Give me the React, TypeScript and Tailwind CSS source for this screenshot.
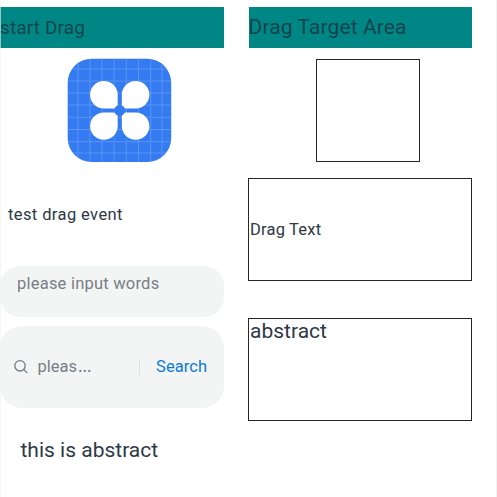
function AppIcon() {
  const lines = [11, 23, 35, 47, 59.3, 71.5, 83.7, 95];
  const petal = "M13.8 0A13.9 13.7 0 0 1 27.7 13.7V23.4a4 4 0 0 1-4 4H13.8a13.7 13.7 0 0 1 0-27.4Z";
  return (
    <svg className="mt-[10px] ml-[67px] block h-[104px] w-[105px]" viewBox="0 0 105 104">
      <defs>
        <clipPath id="tile">
          <rect x="0.7" y="0.7" width="103.5" height="103.3" rx="24" />
        </clipPath>
      </defs>
      <g clipPath="url(#tile)">
        <rect width="105" height="104" fill="#347af0" />
        {lines.map((n) => (
          <path key={n} d={`M${n} 0V104M0 ${n}H105`} stroke="#5b93f4" strokeWidth="1" />
        ))}
      </g>
      <g fill="#fff">
        <path d={petal} transform="translate(23 23)" />
        <path d={petal} transform="translate(82.5 23) scale(-1 1)" />
        <path d={petal} transform="translate(23 81.8) scale(1 -1)" />
        <path d={petal} transform="translate(82.5 81.8) scale(-1 -1)" />
      </g>
      <circle cx="52.7" cy="52.4" r="5.4" fill="#347af0" />
    </svg>
  );
}

export default function App() {
  return (
    <main className="relative flex h-[497px] w-[497px] overflow-hidden bg-white pt-[7px] font-['Roboto','Noto_Sans',sans-serif] whitespace-nowrap text-[#2e3846]">
      <section className="w-[248px] shrink-0">
        <h1 className="flex h-[41px] w-[223.6px] items-center bg-[#008785] pt-px text-[19px] tracking-[0.12px] text-[#14444d]">
          <span>start Drag</span>
        </h1>
        <AppIcon />
        <p className="mt-[40px] ml-[8px] h-6 pt-px text-[16.5px] leading-6 tracking-[0.4px]">
          <span>test drag event</span>
        </p>
        <div className="mt-[40px] h-[51px] w-[223.6px] rounded-[20px] bg-[#f3f5f5] pt-[6px] pl-[17px] text-[16.5px] leading-6 tracking-[0.22px] text-[#777e86]">
          <span>please input words</span>
        </div>
        <div className="mt-[8.6px] flex h-[82.4px] w-[223.6px] items-center rounded-[22px] bg-[#f3f5f5] pl-[13px] text-[16.5px] text-[#777e86]">
          <svg className="h-[15px] w-[15px] shrink-0" viewBox="0 0 15 15" fill="none" stroke="#727a82" strokeWidth="1.3">
            <circle cx="7" cy="6.8" r="5.2" />
            <path d="m10.8 10.6 3.2 3" strokeLinecap="round" />
          </svg>
          <span className="ml-[9.5px] w-[101.5px] pt-[2px]">pleas<span className="ml-px font-['Noto_Sans',sans-serif] text-[17px] leading-none">…</span></span>
          <span className="h-4 w-px bg-[#dde0e2]" />
          <span className="ml-[16px] pt-[2px] tracking-[0.1px] text-[#087adb]">Search</span>
        </div>
        <p className="mt-[28px] ml-[20.5px] text-[21px] leading-7">
          <span>this is abstract</span>
        </p>
      </section>
      <section className="w-[224px] shrink-0">
        <h1 className="ml-[0.5px] flex h-[41px] items-center bg-[#008785] pt-px text-[21px] tracking-[0.1px] text-[#14444d]">
          <span>Drag Target Area</span>
        </h1>
        <div className="mt-[10.5px] ml-[68px] h-[103px] w-[104px] border border-[#262626]" />
        <div className="mt-[16px] flex h-[103px] items-center border border-[#262626] pt-[2px] pl-px text-[16.5px] tracking-[0.2px]">
          <span>Drag Text</span>
        </div>
        <div className="mt-[37px] h-[103px] border border-[#262626] pl-px text-[21px] leading-[25px]">
          <span>abstract</span>
        </div>
      </section>
      <div className="pointer-events-none absolute inset-0 border-r border-[#f1f1f1]" />
      <div className="pointer-events-none absolute inset-y-0 left-0 w-px bg-[#f1f1f1]/60" />
    </main>
  );
}
